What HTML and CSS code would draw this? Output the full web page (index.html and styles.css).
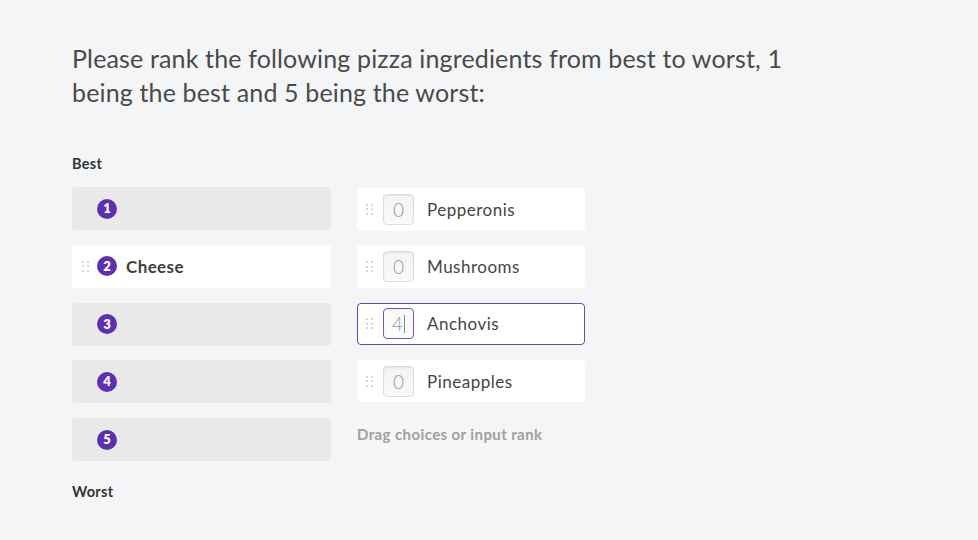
FILE: index.html
```html
<!DOCTYPE html>
<html>
<head>
<meta charset="utf-8">
<link rel="stylesheet" href="styles.css">
</head>
<body>
<div class="page">
  <h1 class="question">Please rank the following pizza ingredients from best to worst, 1 being the best and 5 being the worst:</h1>
  <div class="label label-best">Best</div>
  <div class="rank">
    <div class="slots">
      <div class="slot"><span class="badge">1</span></div>
      <div class="slot filled"><span class="handle"><i></i><i></i><i></i><i></i><i></i><i></i></span><span class="badge">2</span><span class="slot-text">Cheese</span></div>
      <div class="slot"><span class="badge">3</span></div>
      <div class="slot"><span class="badge">4</span></div>
      <div class="slot"><span class="badge">5</span></div>
    </div>
    <div class="choices">
      <div class="choice"><span class="handle"><i></i><i></i><i></i><i></i><i></i><i></i></span><span class="num">0</span><span class="choice-text">Pepperonis</span></div>
      <div class="choice"><span class="handle"><i></i><i></i><i></i><i></i><i></i><i></i></span><span class="num">0</span><span class="choice-text">Mushrooms</span></div>
      <div class="choice active"><span class="handle"><i></i><i></i><i></i><i></i><i></i><i></i></span><span class="num">4<span class="caret"></span></span><span class="choice-text">Anchovis</span></div>
      <div class="choice"><span class="handle"><i></i><i></i><i></i><i></i><i></i><i></i></span><span class="num">0</span><span class="choice-text">Pineapples</span></div>
      <div class="hint">Drag choices or input rank</div>
    </div>
  </div>
  <div class="label label-worst">Worst</div>
</div>
</body>
</html>
```
FILE: styles.css
```css
* { box-sizing: border-box; }
html, body { margin: 0; padding: 0; }
body {
  background: #f4f5f7;
  font-family: Lato, "Liberation Sans", sans-serif;
  color: #464646;
  width: 978px;
  height: 540px;
  overflow: hidden;
}
.page {
  padding: 41px 0 0 72px;
}
.question {
  margin: 0;
  width: 714px;
  font-size: 25px;
  line-height: 34px;
  font-weight: 400;
  color: #4a4a4a;
  letter-spacing: 0.15px;
}
.label {
  font-size: 14.5px;
  font-weight: 700;
  color: #333;
  line-height: 18px;
  letter-spacing: 0.3px;
}
.label-best { margin-top: 46px; }
.label-worst { margin-top: 22px; }
.rank {
  display: flex;
  gap: 26px;
  margin-top: 14px;
}
.slots, .choices {
  display: flex;
  flex-direction: column;
  gap: 14.75px;
}
.slots { width: 259px; }
.choices { width: 228px; padding-top: 1px; }
.slot {
  height: 43px;
  border-radius: 4px;
  background: #e9e9ea;
  display: flex;
  align-items: center;
  padding-left: 25px;
}
.slot.filled {
  background: #fff;
  padding-left: 10px;
}
.badge {
  width: 20px;
  height: 20px;
  border-radius: 50%;
  background: #5f2fb3;
  color: #fff;
  font-size: 13px;
  font-weight: 800;
  display: flex;
  align-items: center;
  justify-content: center;
  line-height: 1;
}
.handle {
  width: 7px;
  height: 11px;
  display: grid;
  grid-template-columns: 2px 2px;
  grid-template-rows: 2px 2px 2px;
  column-gap: 3px;
  row-gap: 2.5px;
  margin-right: 8px;
}
.handle i {
  display: block;
  background: #c9c9c9;
  border-radius: 1px;
}
.slot-text {
  margin-left: 9px;
  font-size: 17px;
  font-weight: 700;
  color: #404040;
  letter-spacing: 0.4px;
}
.choice {
  height: 42.5px;
  background: #fff;
  border: 1px solid #fff;
  border-radius: 4px;
  display: flex;
  align-items: center;
  padding-left: 8px;
}
.choice .handle { margin-right: 10px; }
.choice.active { border-color: #6b44b8; }
.num {
  width: 31px;
  height: 31px;
  border: 1.5px solid #dcdcdc;
  border-radius: 4px;
  background: linear-gradient(#f3f3f3, #fafafa);
  box-shadow: inset 0 1px 2px rgba(0,0,0,0.06);
  display: flex;
  align-items: center;
  justify-content: center;
  font-size: 19px;
  font-weight: 300;
  color: #999;
  position: relative;
}
.active .num {
  border-color: #7a55c2;
  background: #fafafa;
}
.caret {
  display: inline-block;
  width: 1px;
  height: 18px;
  background: #888;
  margin-left: 1px;
}
.choice-text {
  margin-left: 13px;
  font-size: 17px;
  color: #454545;
  letter-spacing: 0.5px;
}
.hint {
  margin-top: 8px;
  font-size: 15px;
  font-weight: 700;
  color: #a0a0a0;
  line-height: 18px;
  letter-spacing: 0.4px;
}
```
